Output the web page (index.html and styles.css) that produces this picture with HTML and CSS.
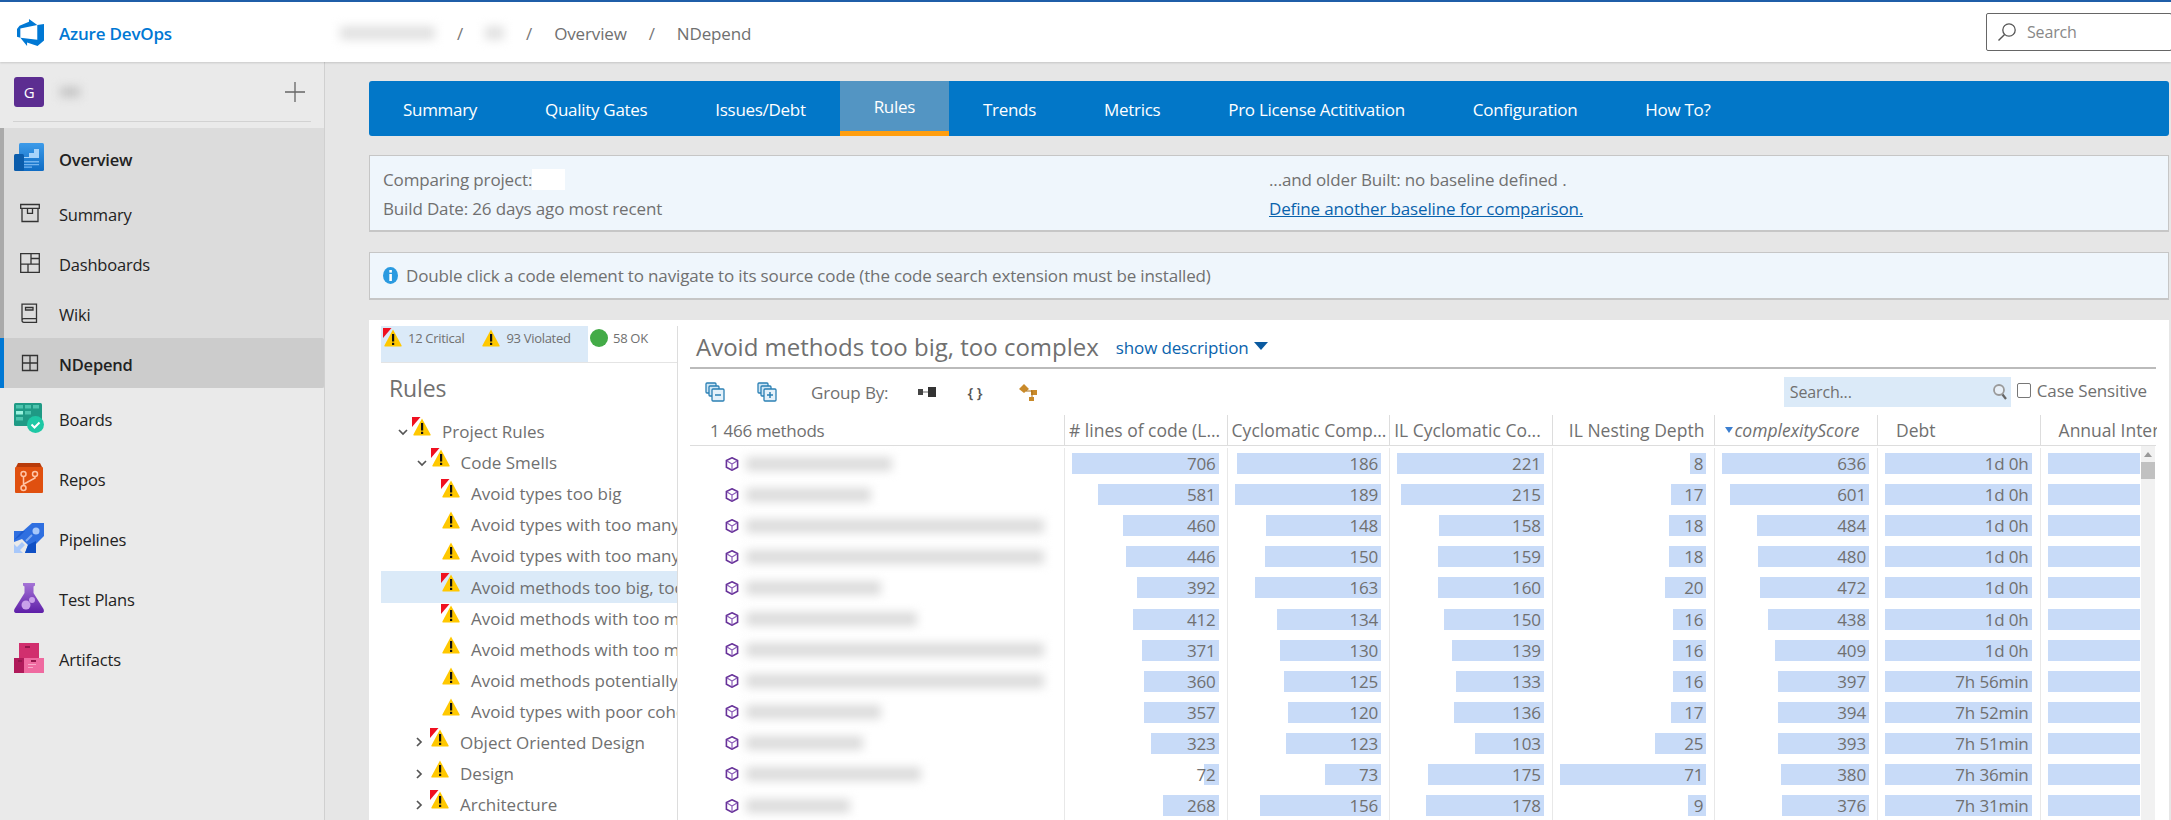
FILE: index.html
```html
<!DOCTYPE html>
<html lang="en">
<head>
    <meta charset="UTF-8">
    <meta name="viewport" content="width=device-width, initial-scale=1.0">
    <title>NDepend - Overview</title>
    <link rel="stylesheet" href="styles.css">
</head>
<body>
    <svg class="defs" width="0" height="0">
        <symbol id="warn" viewBox="0 0 20 20">
            <path d="M10 1.5 L18.6 17.5 Q19 18.5 18 18.5 L2 18.5 Q1 18.5 1.4 17.5 Z" fill="#ffc800"/>
            <rect x="9" y="6" width="2.2" height="7.5" fill="#111"/>
            <rect x="9" y="14.8" width="2.2" height="2.2" fill="#111"/>
        </symbol>
        <symbol id="warn-crit" viewBox="0 0 20 20">
            <path d="M10 1.5 L18.6 17.5 Q19 18.5 18 18.5 L2 18.5 Q1 18.5 1.4 17.5 Z" fill="#ffc800"/>
            <rect x="9" y="6" width="2.2" height="7.5" fill="#111"/>
            <rect x="9" y="14.8" width="2.2" height="2.2" fill="#111"/>
            <path d="M0 0 H8.5 L0 10 Z" fill="#f01020"/>
        </symbol>
        <symbol id="cube" viewBox="0 0 14 14">
            <path d="M7 .8 12.6 3.6V10.2L7 13.2 1.4 10.2V3.6Z" fill="none" stroke="#68339a" stroke-width="1.6"/>
            <path d="M7 7V13M7 7 2 4M7 7 12 4" fill="none" stroke="#8a5cb8" stroke-width="1.2"/>
        </symbol>
    </svg>

    <header class="topbar">
        <div class="brand">
            <svg class="brand-logo" viewBox="0 0 24 24"><path fill="#0078d4" d="M0 8.877L2.247 5.91l8.405-3.416V.022l7.37 5.393L2.966 8.338v8.225L0 15.707zm24-4.45v14.651l-5.753 4.9-9.303-3.057v3.056l-5.978-7.416 15.057 1.798V5.415z"/></svg>
            <span>Azure DevOps</span>
        </div>
        <nav class="crumbs">
            <span class="smudge smudge-org"></span>
            <span class="sep">/</span>
            <span class="smudge smudge-proj"></span>
            <span class="sep">/</span>
            <span>Overview</span>
            <span class="sep">/</span>
            <span>NDepend</span>
        </nav>
        <div class="top-search">
            <svg width="20" height="20" viewBox="0 0 20 20"><circle cx="12" cy="8" r="6.2" fill="none" stroke="#555" stroke-width="1.3"/><path d="M7.6 12.4 1.5 18.5" stroke="#555" stroke-width="1.4"/></svg>
            <span>Search</span>
        </div>
    </header>

    <div class="shell">
        <aside class="sidebar">
            <div class="project-row">
                <span class="project-tile">G</span>
                <span class="smudge smudge-side"></span>
                <svg class="plus" width="20" height="20" viewBox="0 0 20 20"><path d="M10 0V20M0 10H20" stroke="#666" stroke-width="1.3"/></svg>
            </div>
            <div class="nav-group">
                <a class="nav-item nav-head">
                    <svg class="nav-icon" viewBox="0 0 30 30">
                        <defs><linearGradient id="ovg" x1="0" y1="0" x2="0" y2="1"><stop offset="0" stop-color="#3d9be9"/><stop offset="1" stop-color="#0f6cc4"/></linearGradient></defs>
                        <rect x="5" y="0" width="25" height="28" rx="1.5" fill="url(#ovg)"/>
                        <rect x="0" y="11" width="10" height="17" rx="1.5" fill="#0b5cab"/>
                        <path d="M10 14h5v-4h5V6h5v9H10z" fill="#a8d4fa"/>
                        <path d="M10 18h15v1.4H10zM10 21h15v1.2H10zM10 23.6h8v1.2h-8z" fill="#74b4ef"/>
                    </svg>
                    <span>Overview</span>
                </a>
                <a class="nav-item nav-sub">
                    <svg class="sub-icon" viewBox="0 0 20 20" fill="none" stroke="#333" stroke-width="1.3"><path d="M.7 1.5h18.6v3.8H.7zM2 5.3v13.2h16V5.3"/><path d="M7.5 5.3v5h5v-5"/></svg>
                    <span>Summary</span>
                </a>
                <a class="nav-item nav-sub">
                    <svg class="sub-icon" viewBox="0 0 20 20" fill="none" stroke="#333" stroke-width="1.3"><path d="M.7.7h18.6v18.6H.7zM11 .7v10.5M.7 11.2h18.6M11 5.5h8.3M8 11.2v8.1"/></svg>
                    <span>Dashboards</span>
                </a>
                <a class="nav-item nav-sub">
                    <svg class="sub-icon" viewBox="0 0 20 20" fill="none" stroke="#333" stroke-width="1.3"><path d="M2 17V1.2h14.5V19.3H3.8Q2 19.3 2 17.5T3.8 15.7H16.5M5.5 4.5h7.5v2.500H5.500z"/></svg>
                    <span>Wiki</span>
                </a>
                <a class="nav-item nav-sub nav-active">
                    <svg class="sub-icon" viewBox="0 0 20 20" fill="none" stroke="#333" stroke-width="1.3"><path d="M2.5 2.5h15v15h-15zM10 2.5v15M2.5 10h15"/></svg>
                    <span class="nav-strong">NDepend</span>
                </a>
            </div>
            <a class="nav-item nav-service">
                <svg class="nav-icon" viewBox="0 0 30 30">
                    <rect x="0" y="0" width="28" height="23" rx="1.5" fill="#1f9a85"/>
                    <path d="M2 2h7v3.5H2zM11 2h6v3.5h-6zM19 2h6v3.5h-6zM11 8h6v3.5h-6zM2 14h7v3.5H2z" fill="#4dc4ae"/>
                    <rect x="2" y="8" width="7" height="3.5" fill="#9cf3e0"/>
                    <circle cx="21.5" cy="21.5" r="8.5" fill="#1ec8a5"/>
                    <path d="M17.5 21.5l3 3 5-5" fill="none" stroke="#fff" stroke-width="2"/>
                </svg>
                <span>Boards</span>
            </a>
            <a class="nav-item nav-service">
                <svg class="nav-icon" viewBox="0 0 30 30">
                    <path d="M4 0h22l2 4H2z" fill="#b83b0a"/>
                    <rect x="1" y="4" width="28" height="26" rx="1" fill="#e0500f"/>
                    <g fill="none" stroke="#ffc4a6" stroke-width="1.5"><circle cx="9.5" cy="11" r="2.5"/><circle cx="21" cy="11" r="2.5"/><circle cx="9.5" cy="25" r="2.5"/><path d="M9.5 13.5v9M21 13.5v1.5l-11 6"/></g>
                </svg>
                <span>Repos</span>
            </a>
            <a class="nav-item nav-service">
                <svg class="nav-icon" viewBox="0 0 30 30">
                    <path d="M30 0v13L22 21v9H11l3-8-6-6-8 3V8h9l9-8z" fill="#2f6fe0"/>
                    <path d="M11 30l3-8 8-4v12z" fill="#0f4fc4"/>
                    <path d="M0 17l8-9 3 0-6 6z" fill="#1c5bd0"/>
                    <circle cx="22" cy="8" r="3.5" fill="#a8c8fa"/>
                    <path d="M0 30V21l3 3 5-5 3 3-5 5 3 3z" fill="#a8c8fa"/>
                    <path d="M12 18l6-6" stroke="#7ea8f0" stroke-width="2"/>
                </svg>
                <span>Pipelines</span>
            </a>
            <a class="nav-item nav-service">
                <svg class="nav-icon" viewBox="0 0 30 30">
                    <defs><linearGradient id="flg" x1="0" y1="0" x2="0" y2="1"><stop offset="0" stop-color="#a574d6"/><stop offset="1" stop-color="#5e1fa8"/></linearGradient></defs>
                    <path d="M9 0h12v2.5l-1.5 1V10L29.5 26Q31 30 27 30H3Q-1 30 .5 26L10.5 10V3.5L9 2.5z" fill="url(#flg)"/>
                    <circle cx="12" cy="22" r="4.5" fill="#c8a0ea"/>
                    <circle cx="18" cy="17" r="3" fill="#c8a0ea"/>
                </svg>
                <span>Test Plans</span>
            </a>
            <a class="nav-item nav-service">
                <svg class="nav-icon" viewBox="0 0 30 30">
                    <rect x="5" y="0" width="20" height="16" fill="#d12f6e"/>
                    <rect x="0" y="15" width="10" height="15" fill="#b01a5a"/>
                    <rect x="10" y="15" width="20" height="15" fill="#ef6aa0"/>
                    <path d="M11 3h5v2h-5zM4 17h4v2H4zM17 17h5v2h-5z" fill="#95164c"/>
                    <path d="M14 21h8v1h-8zM14 24h5v1h-5z" fill="#f8a8c8"/>
                </svg>
                <span>Artifacts</span>
            </a>
        </aside>

        <main class="content">
            <nav class="tabs">
                <a class="tab">Summary</a>
                <a class="tab">Quality Gates</a>
                <a class="tab">Issues/Debt</a>
                <a class="tab tab-active">Rules</a>
                <a class="tab">Trends</a>
                <a class="tab">Metrics</a>
                <a class="tab">Pro License Actitivation</a>
                <a class="tab">Configuration</a>
                <a class="tab">How To?</a>
            </nav>

            <section class="infobox compare">
                <div class="compare-col">
                    <p>Comparing project:<span class="whiteout"></span></p>
                    <p>Build Date: 26 days ago most recent</p>
                </div>
                <div class="compare-col">
                    <p>...and older Built: no baseline defined .</p>
                    <p><a class="link">Define another baseline for comparison.</a></p>
                </div>
            </section>

            <section class="infobox hint">
                <svg width="15" height="17" viewBox="0 0 15 17"><ellipse cx="7.5" cy="8.5" rx="7.5" ry="8.5" fill="#2a9ae0"/><rect x="6.3" y="7" width="2.6" height="7" fill="#fff"/><rect x="6.3" y="3" width="2.6" height="2.6" fill="#fff"/></svg>
                <span>Double click a code element to navigate to its source code (the code search extension must be installed)</span>
            </section>

            <section class="panel">
                <div class="rules-col">
                    <div class="counters">
                        <div class="counters-hl">
                            <span class="counter"><svg class="w20"><use href="#warn-crit"/></svg>12 Critical</span>
                            <span class="counter"><svg class="w20"><use href="#warn"/></svg>93 Violated</span>
                        </div>
                        <span class="counter"><i class="ok-dot"></i>58 OK</span>
                    </div>
                    <h2 class="rules-title">Rules</h2>
                    <ul class="tree">
                        <li class="node lvl0"><svg class="chev" viewBox="0 0 10 10"><path d="M1 3l4 4 4-4"/></svg><svg class="w20"><use href="#warn-crit"/></svg><span>Project Rules</span></li>
                        <li class="node lvl1"><svg class="chev" viewBox="0 0 10 10"><path d="M1 3l4 4 4-4"/></svg><svg class="w20"><use href="#warn-crit"/></svg><span>Code Smells</span></li>
                        <li class="node lvl2"><svg class="w20"><use href="#warn-crit"/></svg><span>Avoid types too big</span></li>
                        <li class="node lvl2"><svg class="w20"><use href="#warn"/></svg><span>Avoid types with too many methods</span></li>
                        <li class="node lvl2"><svg class="w20"><use href="#warn"/></svg><span>Avoid types with too many fields</span></li>
                        <li class="node lvl2 node-selected"><svg class="w20"><use href="#warn-crit"/></svg><span>Avoid methods too big, too complex</span></li>
                        <li class="node lvl2"><svg class="w20"><use href="#warn-crit"/></svg><span>Avoid methods with too many parameters</span></li>
                        <li class="node lvl2"><svg class="w20"><use href="#warn"/></svg><span>Avoid methods with too many locals</span></li>
                        <li class="node lvl2"><svg class="w20"><use href="#warn"/></svg><span>Avoid methods potentially poorly commented</span></li>
                        <li class="node lvl2"><svg class="w20"><use href="#warn"/></svg><span>Avoid types with poor cohesion</span></li>
                        <li class="node lvl1 closed"><svg class="chev" viewBox="0 0 10 10"><path d="M3 1l4 4-4 4"/></svg><svg class="w20"><use href="#warn-crit"/></svg><span>Object Oriented Design</span></li>
                        <li class="node lvl1 closed"><svg class="chev" viewBox="0 0 10 10"><path d="M3 1l4 4-4 4"/></svg><svg class="w20"><use href="#warn"/></svg><span>Design</span></li>
                        <li class="node lvl1 closed"><svg class="chev" viewBox="0 0 10 10"><path d="M3 1l4 4-4 4"/></svg><svg class="w20"><use href="#warn-crit"/></svg><span>Architecture</span></li>
                    </ul>
                </div>

                <div class="detail-col">
                    <div class="detail-head">
                        <h1>Avoid methods too big, too complex</h1>
                        <a class="show-desc">show description</a>
                        <i class="caret"></i>
                    </div>
                    <div class="toolbar">
                        <svg class="tool" viewBox="0 0 20 20"><g fill="#cfe6f5" stroke="#2b80b4" stroke-width="1.3"><rect x="1" y="1" width="10" height="10" rx="1"/><rect x="4" y="4" width="10" height="10" rx="1"/><rect x="7" y="7" width="12" height="12" rx="1" fill="#e4f1fa"/></g><path d="M10 13h6" stroke="#2b80b4" stroke-width="1.5"/></svg>
                        <svg class="tool" viewBox="0 0 20 20"><g fill="#cfe6f5" stroke="#2b80b4" stroke-width="1.3"><rect x="1" y="1" width="10" height="10" rx="1"/><rect x="4" y="4" width="10" height="10" rx="1"/><rect x="7" y="7" width="12" height="12" rx="1" fill="#e4f1fa"/></g><path d="M10 13h6M13 10v6" stroke="#2b80b4" stroke-width="1.5"/></svg>
                        <span class="group-label">Group By:</span>
                        <svg class="tool-g" viewBox="0 0 20 20"><rect x="1" y="7" width="5" height="6" fill="#444"/><rect x="11" y="5" width="8" height="10" fill="#333"/><path d="M6 10h5" stroke="#666"/></svg>
                        <span class="braces">{ }</span>
                        <svg class="tool-g" viewBox="0 0 20 20"><path d="M1 7l5-5 5 5-5 4z" fill="#c98a2a"/><path d="M13 8h6v5h-6zM11 15h5v4h-5z" fill="#c98a2a"/><path d="M8 9h6v6" stroke="#a86f1a" fill="none"/></svg>
                        <div class="toolbar-right">
                            <div class="search-box">
                                <span>Search...</span>
                                <svg width="16" height="18" viewBox="0 0 16 18"><circle cx="7" cy="7" r="5" fill="#e8f0f8" stroke="#9a9a9a" stroke-width="1.8"/><path d="M10.5 11.5l3.5 4.5" stroke="#666" stroke-width="2.2"/></svg>
                            </div>
                            <label class="case"><i class="check"></i>Case Sensitive</label>
                        </div>
                    </div>

                    <div class="grid">
                        <div class="row head">
                            <div class="name">1 466 methods</div>
                            <div class="col"><span class="hcell">#&nbsp;lines of code (L...</span></div>
                            <div class="col"><span class="hcell">Cyclomatic Comp...</span></div>
                            <div class="col"><span class="hcell">IL Cyclomatic Co...</span></div>
                            <div class="col"><span class="hcell hcell-right">IL Nesting Depth</span></div>
                            <div class="col"><span class="hcell hcell-sort"><i class="sort"></i>complexityScore</span></div>
                            <div class="col"><span class="hcell hcell-pad">Debt</span></div>
                            <div class="col col-last"><span class="hcell hcell-pad">Annual Interest</span></div>
                        </div>
                        <div class="row"><div class="name"><svg class="w14"><use href="#cube"/></svg><span class="smudge nm" style="width:146px"></span></div><div class="col"><div class="bar" style="width:100%">706</div></div><div class="col"><div class="bar" style="width:98.4%">186</div></div><div class="col"><div class="bar" style="width:100%">221</div></div><div class="col"><div class="bar" style="width:11.3%">8</div></div><div class="col"><div class="bar" style="width:100%">636</div></div><div class="col"><div class="bar" style="width:100%">1d 0h</div></div><div class="col col-last"><div class="bar" style="width:100%"></div></div></div>
                        <div class="row"><div class="name"><svg class="w14"><use href="#cube"/></svg><span class="smudge nm" style="width:125px"></span></div><div class="col"><div class="bar" style="width:82.3%">581</div></div><div class="col"><div class="bar" style="width:100%">189</div></div><div class="col"><div class="bar" style="width:97.3%">215</div></div><div class="col"><div class="bar" style="width:23.9%">17</div></div><div class="col"><div class="bar" style="width:94.5%">601</div></div><div class="col"><div class="bar" style="width:100%">1d 0h</div></div><div class="col col-last"><div class="bar" style="width:100%"></div></div></div>
                        <div class="row"><div class="name"><svg class="w14"><use href="#cube"/></svg><span class="smudge nm" style="width:298px"></span></div><div class="col"><div class="bar" style="width:65.2%">460</div></div><div class="col"><div class="bar" style="width:78.3%">148</div></div><div class="col"><div class="bar" style="width:71.5%">158</div></div><div class="col"><div class="bar" style="width:25.4%">18</div></div><div class="col"><div class="bar" style="width:76.1%">484</div></div><div class="col"><div class="bar" style="width:100%">1d 0h</div></div><div class="col col-last"><div class="bar" style="width:100%"></div></div></div>
                        <div class="row"><div class="name"><svg class="w14"><use href="#cube"/></svg><span class="smudge nm" style="width:298px"></span></div><div class="col"><div class="bar" style="width:63.2%">446</div></div><div class="col"><div class="bar" style="width:79.4%">150</div></div><div class="col"><div class="bar" style="width:71.9%">159</div></div><div class="col"><div class="bar" style="width:25.4%">18</div></div><div class="col"><div class="bar" style="width:75.5%">480</div></div><div class="col"><div class="bar" style="width:100%">1d 0h</div></div><div class="col col-last"><div class="bar" style="width:100%"></div></div></div>
                        <div class="row"><div class="name"><svg class="w14"><use href="#cube"/></svg><span class="smudge nm" style="width:135px"></span></div><div class="col"><div class="bar" style="width:55.5%">392</div></div><div class="col"><div class="bar" style="width:86.2%">163</div></div><div class="col"><div class="bar" style="width:72.4%">160</div></div><div class="col"><div class="bar" style="width:28.2%">20</div></div><div class="col"><div class="bar" style="width:74.2%">472</div></div><div class="col"><div class="bar" style="width:100%">1d 0h</div></div><div class="col col-last"><div class="bar" style="width:100%"></div></div></div>
                        <div class="row"><div class="name"><svg class="w14"><use href="#cube"/></svg><span class="smudge nm" style="width:171px"></span></div><div class="col"><div class="bar" style="width:58.4%">412</div></div><div class="col"><div class="bar" style="width:70.9%">134</div></div><div class="col"><div class="bar" style="width:67.9%">150</div></div><div class="col"><div class="bar" style="width:22.5%">16</div></div><div class="col"><div class="bar" style="width:68.9%">438</div></div><div class="col"><div class="bar" style="width:100%">1d 0h</div></div><div class="col col-last"><div class="bar" style="width:100%"></div></div></div>
                        <div class="row"><div class="name"><svg class="w14"><use href="#cube"/></svg><span class="smudge nm" style="width:298px"></span></div><div class="col"><div class="bar" style="width:52.5%">371</div></div><div class="col"><div class="bar" style="width:68.8%">130</div></div><div class="col"><div class="bar" style="width:62.9%">139</div></div><div class="col"><div class="bar" style="width:22.5%">16</div></div><div class="col"><div class="bar" style="width:64.3%">409</div></div><div class="col"><div class="bar" style="width:100%">1d 0h</div></div><div class="col col-last"><div class="bar" style="width:100%"></div></div></div>
                        <div class="row"><div class="name"><svg class="w14"><use href="#cube"/></svg><span class="smudge nm" style="width:298px"></span></div><div class="col"><div class="bar" style="width:51%">360</div></div><div class="col"><div class="bar" style="width:66.1%">125</div></div><div class="col"><div class="bar" style="width:60.2%">133</div></div><div class="col"><div class="bar" style="width:22.5%">16</div></div><div class="col"><div class="bar" style="width:62.4%">397</div></div><div class="col"><div class="bar" style="width:100%">7h 56min</div></div><div class="col col-last"><div class="bar" style="width:100%"></div></div></div>
                        <div class="row"><div class="name"><svg class="w14"><use href="#cube"/></svg><span class="smudge nm" style="width:135px"></span></div><div class="col"><div class="bar" style="width:50.6%">357</div></div><div class="col"><div class="bar" style="width:63.5%">120</div></div><div class="col"><div class="bar" style="width:61.5%">136</div></div><div class="col"><div class="bar" style="width:23.9%">17</div></div><div class="col"><div class="bar" style="width:62%">394</div></div><div class="col"><div class="bar" style="width:100%">7h 52min</div></div><div class="col col-last"><div class="bar" style="width:100%"></div></div></div>
                        <div class="row"><div class="name"><svg class="w14"><use href="#cube"/></svg><span class="smudge nm" style="width:117px"></span></div><div class="col"><div class="bar" style="width:45.8%">323</div></div><div class="col"><div class="bar" style="width:65.1%">123</div></div><div class="col"><div class="bar" style="width:46.6%">103</div></div><div class="col"><div class="bar" style="width:35.2%">25</div></div><div class="col"><div class="bar" style="width:61.8%">393</div></div><div class="col"><div class="bar" style="width:100%">7h 51min</div></div><div class="col col-last"><div class="bar" style="width:100%"></div></div></div>
                        <div class="row"><div class="name"><svg class="w14"><use href="#cube"/></svg><span class="smudge nm" style="width:175px"></span></div><div class="col"><div class="bar" style="width:10.2%">72</div></div><div class="col"><div class="bar" style="width:38.6%">73</div></div><div class="col"><div class="bar" style="width:79.2%">175</div></div><div class="col"><div class="bar" style="width:100%">71</div></div><div class="col"><div class="bar" style="width:59.7%">380</div></div><div class="col"><div class="bar" style="width:100%">7h 36min</div></div><div class="col col-last"><div class="bar" style="width:100%"></div></div></div>
                        <div class="row"><div class="name"><svg class="w14"><use href="#cube"/></svg><span class="smudge nm" style="width:104px"></span></div><div class="col"><div class="bar" style="width:38%">268</div></div><div class="col"><div class="bar" style="width:82.5%">156</div></div><div class="col"><div class="bar" style="width:80.5%">178</div></div><div class="col"><div class="bar" style="width:12.7%">9</div></div><div class="col"><div class="bar" style="width:59.1%">376</div></div><div class="col"><div class="bar" style="width:100%">7h 31min</div></div><div class="col col-last"><div class="bar" style="width:100%"></div></div></div>
                        <div class="scroller"><i class="scroll-up"></i><i class="scroll-thumb"></i></div>
                    </div>
                </div>
            </section>
        </main>
    </div>
</body>
</html>
```

FILE: styles.css
```css
html, body {
    margin: 0;
    height: 100%;
    overflow: hidden;
}
body {
    font-family: "Open Sans", Arial, sans-serif;
    font-size: 17px;
    letter-spacing: -0.15px;
    color: #707070;
    background-color: #e6e6e6;
    display: flex;
    flex-direction: column;
}
.defs {
    position: absolute;
}
p, h1, h2, ul {
    margin: 0;
    padding: 0;
}
ul {
    list-style-type: none;
}

/* blurred-out names */
.smudge {
    display: inline-block;
    height: 14px;
    background-color: #dcdcdc;
    filter: blur(5px);
}
.smudge-org { width: 95px; background-color: #e2e2e2; }
.smudge-proj { width: 19px; background-color: #e2e2e2; }
.smudge-side { width: 20px; height: 10px; background-color: #c4c4c4; margin-left: 16px; }

/* top bar */
.topbar {
    height: 60px;
    flex: none;
    border-top: 2px solid #1f5ea8;
    background-color: #fff;
    box-shadow: 0 1px 2px rgba(0, 0, 0, 0.15);
    display: flex;
    align-items: center;
    position: relative;
    z-index: 1;
}
.brand {
    width: 340px;
    display: flex;
    align-items: center;
    gap: 15px;
    padding: 2px 0 0 17px;
    box-sizing: border-box;
    color: #0078d4;
    font-weight: 600;
    font-size: 17px;
    letter-spacing: -0.2px;
}
.brand-logo {
    width: 27px;
    height: 27px;
    margin-top: -2px;
}
.crumbs {
    display: flex;
    align-items: center;
    gap: 22px;
    padding-top: 2px;
}
.crumbs .sep {
    color: #777;
}
.top-search {
    margin-left: auto;
    width: 186px;
    height: 38px;
    box-sizing: border-box;
    margin-right: -1px;
    border: 1px solid #666;
    border-radius: 2px;
    display: flex;
    align-items: center;
    gap: 10px;
    padding-left: 10px;
    color: #888;
    font-size: 16px;
}

/* layout */
.shell {
    flex: 1;
    display: flex;
    min-height: 0;
}
.sidebar {
    width: 325px;
    flex: none;
    box-sizing: border-box;
    background-color: #eaeaea;
    border-right: 1px solid #d0d0d0;
    color: #222;
    font-size: 16.5px;
    letter-spacing: -0.2px;
}
.project-row {
    height: 60px;
    margin: 0 13px 6px;
    border-bottom: 1px solid #d2d2d2;
    display: flex;
    align-items: center;
    box-sizing: border-box;
    padding: 0 0 0 1px;
}
.project-tile {
    width: 30px;
    height: 30px;
    border-radius: 3px;
    background-color: #5c2d91;
    color: #fff;
    font-size: 15px;
    display: flex;
    align-items: center;
    justify-content: center;
}
.plus {
    margin-left: auto;
    margin-right: 6px;
}
.nav-group {
    background-color: #dcdcdc;
    border-left: 4px solid #aaa;
}
.nav-item {
    display: flex;
    align-items: center;
}
.nav-item span {
    padding-top: 2px;
}
.nav-head {
    height: 60px;
    padding-left: 10px;
    gap: 15px;
    font-weight: 600;
}
.nav-sub {
    height: 50px;
    padding-left: 16px;
    gap: 19px;
}
.nav-active {
    background-color: #ccc;
    border-left: 4px solid #0078d4;
    margin-left: -4px;
    border-radius: 0 2px 2px 0;
}
.nav-strong {
    font-weight: 600;
}
.nav-icon {
    width: 30px;
    height: 30px;
    flex: none;
}
.sub-icon {
    width: 20px;
    height: 20px;
    flex: none;
}
.nav-service {
    height: 60px;
    padding-left: 14px;
    gap: 15px;
}

/* main column */
.content {
    flex: 1;
    min-width: 0;
    padding: 19px 2px 0 44px;
    overflow: hidden;
}
.tabs {
    height: 55px;
    background-color: #0277c8;
    border-radius: 3px;
    display: flex;
    color: #fff;
    letter-spacing: -0.3px;
}
.tab {
    padding: 1px 34px 0;
    display: flex;
    align-items: center;
    height: 100%;
    box-sizing: border-box;
}
.tab-active {
    background-color: #5395c3;
    border-bottom: 5px solid #ff9e0f;
}
.infobox {
    background-color: #eff6fc;
    border: 1px solid #c6c6c6;
    border-bottom-width: 2px;
    margin-top: 19px;
    box-sizing: border-box;
}
.compare {
    height: 77px;
    display: flex;
    padding: 9px 13px;
}
.compare p {
    height: 29px;
    display: flex;
    align-items: center;
}
.compare-col {
    width: 887px;
}
.whiteout {
    display: inline-block;
    width: 33px;
    height: 21px;
    background-color: #fff;
}
.link {
    color: #0a63ad;
    text-decoration: underline;
}
.hint {
    height: 48px;
    margin-top: 20px;
    display: flex;
    align-items: center;
    gap: 8px;
    padding-left: 13px;
}
.panel {
    margin-top: 20px;
    background-color: #fff;
    display: flex;
    height: 520px;
    padding: 6px 13px 0 12px;
}

/* rules tree */
.rules-col {
    width: 296px;
    flex: none;
    border-right: 1px solid #ddd;
    overflow: hidden;
}
.counters {
    height: 36px;
    display: flex;
    border-bottom: 1px solid #e4e4e4;
    font-size: 13px;
    line-height: 24px;
    letter-spacing: -0.3px;
    white-space: nowrap;
}
.counters-hl {
    width: 207px;
    background-color: #dbeaf8;
    display: flex;
}
.counter {
    display: flex;
    align-items: flex-start;
    gap: 5px;
    height: 24px;
    margin-right: 15px;
}
.counter .w20 {
    margin: 2px 0 0 2px;
}
.ok-dot {
    width: 18px;
    height: 18px;
    background-color: #43ab47;
    border-radius: 50%;
    margin: 3px 0 0 2px;
}
.rules-title {
    font-size: 23px;
    font-weight: 400;
    margin: 8px 0 11px 8px;
    line-height: 34px;
}
.w20 {
    width: 20px;
    height: 20px;
    flex: none;
}
.w14 {
    width: 14px;
    height: 14px;
    flex: none;
}
.node {
    height: 31.1px;
    display: flex;
    align-items: center;
    white-space: nowrap;
    letter-spacing: 0;
}
.node .w20 {
    margin-top: -9px;
    margin-right: 10px;
}
.chev {
    width: 10px;
    height: 10px;
    flex: none;
    fill: none;
    stroke: #555;
    stroke-width: 1.7;
}
.lvl0 { padding-left: 17px; }
.lvl0 .w20 { margin-left: 4px; }
.lvl1 { padding-left: 36px; }
.lvl1 .w20 { margin-left: 3.5px; margin-right: 10px; }
.lvl1.closed { padding-left: 33px; }
.lvl1.closed .w20 { margin-left: 6px; }
.lvl2 { padding-left: 60px; }
.node-selected {
    background-color: #dbeaf8;
}

/* detail side */
.detail-col {
    flex: 1;
    min-width: 0;
    padding-left: 12px;
}
.detail-head {
    height: 43px;
    border-bottom: 2px solid #bbb;
    display: flex;
    align-items: center;
    padding-left: 6px;
    box-sizing: border-box;
}
.detail-head h1 {
    font-size: 24px;
    font-weight: 400;
    margin-right: 17px;
    letter-spacing: 0;
}
.show-desc {
    color: #0a63ad;
    font-size: 17px;
    padding-top: 2px;
}
.caret {
    width: 0;
    height: 0;
    margin: 0 0 2px 5px;
    border-left: 7px solid transparent;
    border-right: 7px solid transparent;
    border-top: 8px solid #0a5aa0;
}
.toolbar {
    height: 46px;
    display: flex;
    align-items: center;
    padding: 0 9px 0 15px;
}
.tool {
    width: 20px;
    height: 22px;
    margin-right: 32px;
}
.tool-g {
    width: 20px;
    height: 20px;
}
.group-label {
    margin: 0 29px 0 2px;
}
.braces {
    margin: 0 36px 0 30px;
    font-weight: 600;
    font-size: 15px;
    color: #555;
}
.toolbar-right {
    margin-left: auto;
    display: flex;
    align-items: center;
    gap: 6px;
}
.search-box {
    width: 227px;
    height: 30px;
    box-sizing: border-box;
    background-color: #dbeaf8;
    padding: 0 3px 0 6px;
    display: flex;
    align-items: center;
    justify-content: space-between;
    font-size: 16px;
}
.case {
    display: flex;
    align-items: center;
    gap: 6px;
    margin-bottom: 3px;
}
.check {
    width: 12px;
    height: 13px;
    border: 1px solid #777;
    border-radius: 2px;
}

/* metric table */
.grid {
    position: relative;
}
.row {
    display: flex;
    height: 31.1px;
    align-items: center;
}
.name {
    width: 374px;
    flex: none;
    display: flex;
    align-items: center;
    padding-left: 35px;
    box-sizing: border-box;
    gap: 7px;
}
.col {
    width: 162.6px;
    height: 100%;
    flex: none;
    box-sizing: border-box;
    padding: 0 8px 0 7px;
    border-left: 1px solid #e8e8e8;
    display: flex;
    align-items: center;
    justify-content: flex-end;
}
.col-last {
    width: 117px;
    padding-right: 17px;
}
.bar {
    height: 21px;
    line-height: 21px;
    background-color: #c8dbf8;
    display: flex;
    justify-content: flex-end;
    min-width: 0;
    padding-right: 3px;
    box-sizing: border-box;
    white-space: nowrap;
}
.head {
    height: 30px;
    border-bottom: 1px solid #ddd;
    margin-bottom: 2px;
}
.head .name {
    padding-left: 20px;
    letter-spacing: -0.3px;
}
.head .col {
    border-left: 1px solid #ddd;
    justify-content: flex-start;
    padding: 0 0 0 4px;
    white-space: nowrap;
    overflow: hidden;
}
.hcell {
    font-size: 17.5px;
    letter-spacing: 0;
}
.hcell-right {
    margin-left: auto;
    margin-right: 10px;
}
.hcell-sort {
    font-style: italic;
    padding-left: 6px;
    display: flex;
    align-items: center;
    gap: 1px;
}
.hcell-pad {
    padding-left: 14px;
}
.sort {
    width: 0;
    height: 0;
    border-left: 4px solid transparent;
    border-right: 4px solid transparent;
    border-top: 6px solid #3c7fd0;
}
.scroller {
    position: absolute;
    top: 31px;
    right: 1px;
    width: 14px;
    bottom: 0;
    background-color: #f1f1f1;
}
.scroll-up {
    display: block;
    width: 0;
    height: 0;
    margin: 6px auto 5px;
    border-left: 4px solid transparent;
    border-right: 4px solid transparent;
    border-bottom: 5px solid #999;
}
.scroll-thumb {
    display: block;
    height: 17px;
    background-color: #c1c1c1;
}
```
